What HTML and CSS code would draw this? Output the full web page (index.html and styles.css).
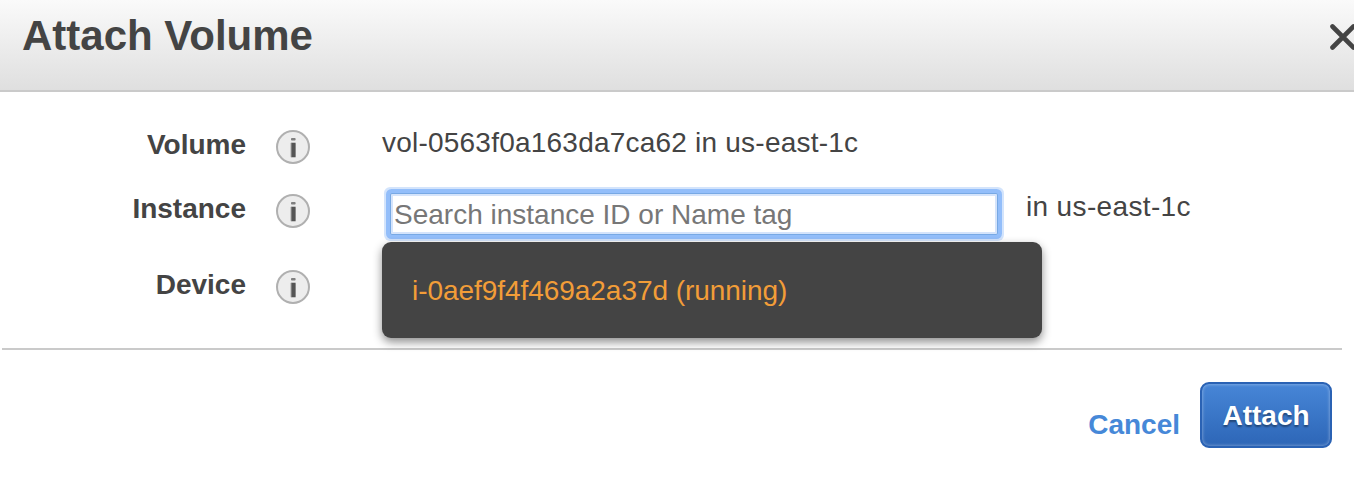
FILE: index.html
```html
<!DOCTYPE html>
<html lang="en">
<head>
<meta charset="utf-8">
<title>Attach Volume</title>
<link rel="stylesheet" href="styles.css">
</head>
<body>
<svg class="defs" width="0" height="0" aria-hidden="true">
  <symbol id="info" viewBox="0 0 36 36">
    <circle cx="18" cy="18" r="16" fill="#ededed" stroke="#b0b0b0" stroke-width="2"/>
    <rect x="16" y="9" width="4.6" height="2.6" rx=".8" fill="#808080"/>
    <rect x="15.6" y="13.4" width="5.4" height="15" rx="1" fill="#999"/>
    <rect x="16.6" y="14" width="3.6" height="14" fill="#555"/>
  </symbol>
</svg>
<div class="dialog">
  <header class="header">
    <h1 class="title">Attach Volume</h1>
    <svg class="close" viewBox="0 0 28 28"><path d="M3.5 3.5L24.5 24.5M24.5 3.5L3.5 24.5"/></svg>
  </header>
  <main class="form">
    <div class="row row-volume">
      <div class="label">Volume</div>
      <svg class="info"><use href="#info"/></svg>
      <div class="value"><span class="volume-id">vol-0563f0a163da7ca62 in us-east-1c</span></div>
    </div>
    <div class="row row-instance">
      <div class="label">Instance</div>
      <svg class="info"><use href="#info"/></svg>
      <div class="value">
        <div class="picker">
          <input class="search" type="text" placeholder="Search instance ID or Name tag">
          <div class="menu">i-0aef9f4f469a2a37d (running)</div>
        </div>
        <span class="zone">in us-east-1c</span>
      </div>
    </div>
    <div class="row row-device">
      <div class="label">Device</div>
      <svg class="info"><use href="#info"/></svg>
    </div>
  </main>
  <footer class="footer">
    <a class="cancel">Cancel</a>
    <button class="attach">Attach</button>
  </footer>
</div>
</body>
</html>
```
FILE: styles.css
```css
* { box-sizing: border-box; }
body {
  margin: 0;
  overflow: hidden;
  background: #fff;
  color: #444;
  font: 28px/32px "Liberation Sans", Arial, sans-serif;
}
.defs { display: block; }
.dialog { width: 1354px; height: 478px; overflow: hidden; }
.header {
  display: flex;
  justify-content: space-between;
  height: 92px;
  padding: 12px 0 0 22px;
  border-bottom: 2px solid #cacaca;
  background: linear-gradient(#fafafa, #dfdfdf);
}
.title { margin: 0; font-size: 42px; line-height: 48px; white-space: nowrap; }
.close {
  flex: none;
  width: 28px;
  height: 28px;
  margin: 11px -3px 0 0;
  fill: none;
  stroke: #444;
  stroke-width: 4.6;
  stroke-linecap: round;
}
.form {
  height: 258px;
  margin: 0 12px 0 2px;
  padding-top: 34px;
  border-bottom: 2px solid #cacaca;
}
.row { display: flex; align-items: flex-start; white-space: nowrap; }
.row-volume { height: 64px; }
.row-instance { height: 76px; }
.row-device { height: 60px; }
.label { width: 244px; padding-top: 3px; text-align: right; font-weight: bold; }
.info { flex: none; width: 36px; height: 36px; margin: 3px 71px 0 29px; }
.value { display: flex; align-items: flex-start; }
.volume-id { margin-top: 1px; letter-spacing: .22px; }
.zone { margin-top: 1px; letter-spacing: .35px; }
.picker { position: relative; width: 644px; }
.search {
  display: block;
  width: 608px;
  height: 42px;
  margin: 3px 0 0 8px;
  padding: 1px 3px 0;
  border: 1px solid #78a9e4;
  outline: none;
  background: #fff;
  box-shadow: inset 0 0 0 2px #d5e4fb, 0 0 0 4px #93befa, 0 0 0 6px #d3e4fc;
  border-radius: 2px;
  font: 28px/32px "Liberation Sans", Arial, sans-serif;
}
.search::placeholder { color: #777; opacity: 1; }
.menu {
  position: absolute;
  top: 52px;
  left: 0;
  width: 660px;
  height: 96px;
  padding: 33px 30px 0;
  border-radius: 9px;
  background: #444;
  box-shadow: 0 4px 10px rgba(0, 0, 0, .45);
  color: #f29d38;
  letter-spacing: -.05px;
}
.footer { display: flex; justify-content: flex-end; padding: 32px 22px 0 0; font-weight: bold; }
.cancel { margin: 27px 20px 0 0; color: #4688d8; }
.attach {
  width: 132px;
  height: 66px;
  padding: 2px 0 0;
  border: 2px solid #2a62b4;
  border-radius: 9px;
  background: linear-gradient(#4786d7, #2d66b7);
  box-shadow: inset 0 0 3px 1px rgba(255, 255, 255, .28);
  color: #fff;
  font: bold 28px/32px "Liberation Sans", Arial, sans-serif;
  text-shadow: 0 2px 2px rgba(0, 0, 0, .4);
}
```
